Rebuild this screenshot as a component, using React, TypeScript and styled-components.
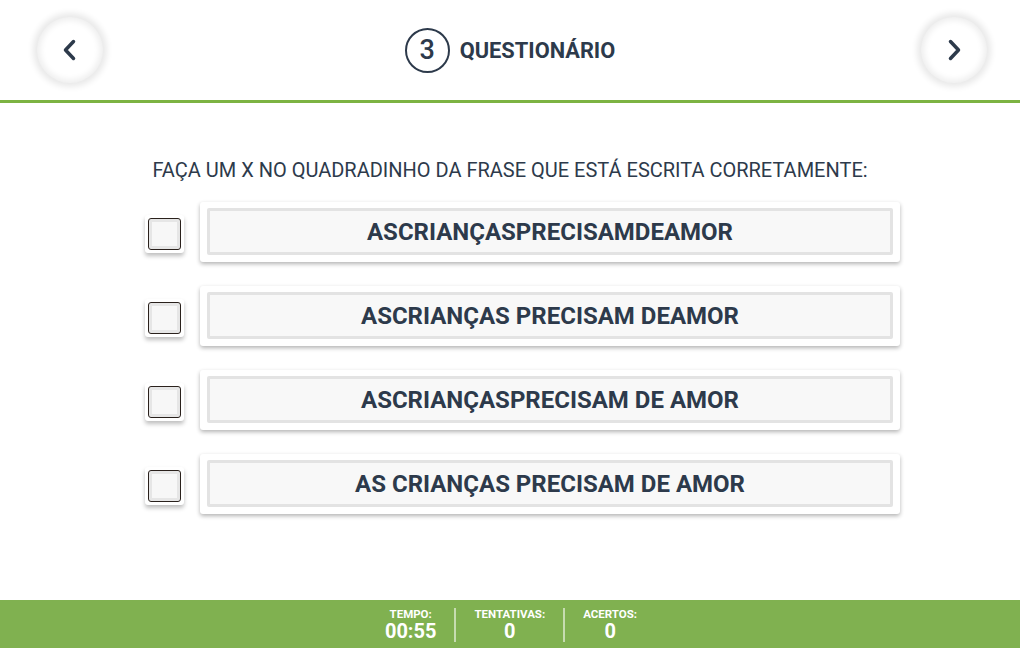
import React from "react";
import styled, { createGlobalStyle } from "styled-components";

const Global = createGlobalStyle`
  html, body { margin: 0; padding: 0; background: #ffffff; }
  body { font-family: Roboto, "Liberation Sans", sans-serif; color: #2d3a4b; }
  * { box-sizing: border-box; }
`;

const Page = styled.div`
  width: 1020px;
  height: 648px;
  display: flex;
  flex-direction: column;
  overflow: hidden;
`;

const Header = styled.header`
  height: 103px;
  flex: none;
  border-bottom: 3px solid #7cb342;
  display: flex;
  align-items: center;
  justify-content: space-between;
  padding: 0 33px 0 37px;
`;

const NavButton = styled.button`
  width: 66px;
  height: 66px;
  border-radius: 50%;
  border: none;
  background: #ffffff;
  box-shadow: 0 0 6px 4px rgba(0, 0, 0, 0.09), inset 0 0 6px 3px rgba(0, 0, 0, 0.07);
  display: flex;
  align-items: center;
  justify-content: center;
  padding: 0;
  cursor: pointer;
`;

const Title = styled.div`
  display: flex;
  align-items: center;
  gap: 10px;
  margin-right: 4px;
`;

const StepCircle = styled.div`
  width: 45px;
  height: 45px;
  border-radius: 50%;
  border: 2px solid #2d3a4b;
  display: flex;
  align-items: center;
  justify-content: center;
  font-size: 27px;
  font-weight: 500;
  color: #2d3a4b;
`;

const TitleText = styled.span`
  font-size: 21.8px;
  font-weight: 700;
  color: #2d3a4b;
`;

const Main = styled.main`
  flex: 1;
  display: flex;
  flex-direction: column;
  padding-top: 55px;
`;

const Instruction = styled.p`
  margin: 0 0 20px 0;
  text-align: center;
  font-size: 20px;
  font-weight: 400;
  color: #2d3a4b;
  line-height: 24px;
`;

const Options = styled.div`
  display: flex;
  flex-direction: column;
  gap: 24px;
  padding-left: 145px;
`;

const Row = styled.label`
  display: flex;
  align-items: center;
  gap: 16px;
`;

const CheckWrap = styled.div`
  width: 39px;
  height: 38px;
  margin-top: 4px;
  background: #ffffff;
  border-radius: 3px;
  box-shadow: 0 3px 4px rgba(0, 0, 0, 0.25);
  display: flex;
  align-items: center;
  justify-content: center;
`;

const Check = styled.div`
  width: 33px;
  height: 32px;
  border: 1.5px solid #2a211c;
  border-radius: 3px;
  background: #f7f7f7;
  box-shadow: inset 0 0 0 3px #e6e6e6;
`;

const Card = styled.div`
  width: 700px;
  height: 60px;
  background: #ffffff;
  border-radius: 3px;
  box-shadow: 0 2px 4px rgba(0, 0, 0, 0.3);
  padding: 6px 7px 7px 7px;
`;

const CardInner = styled.div`
  height: 100%;
  background: #f8f8f8;
  border: 3px solid #e3e3e3;
  border-radius: 2px;
  display: flex;
  align-items: center;
  justify-content: center;
  font-size: 24px;
  font-weight: 700;
  color: #2d3a4b;
`;

const Footer = styled.footer`
  height: 48px;
  flex: none;
  background: #80b150;
  display: flex;
  justify-content: center;
  align-items: stretch;
  padding: 8px 0 6px 2px;
`;

const Stat = styled.div<{ $sep?: boolean }>`
  display: flex;
  flex-direction: column;
  align-items: center;
  padding: 0 18px;
  border-left: ${(p) => (p.$sep ? "2px solid rgba(255,255,255,0.55)" : "none")};
  color: #ffffff;
  font-weight: 700;
`;

const StatLabel = styled.span`
  font-size: 11.5px;
  line-height: 13px;
`;

const StatValue = styled.span`
  font-size: 20px;
  line-height: 20px;
`;

const Chevron = ({ dir }: { dir: "left" | "right" }) => (
  <svg width="24" height="24" viewBox="0 0 24 24">
    <path
      d={dir === "left" ? "M15.5 3.5 L7.5 12 L15.5 20.5" : "M8.5 3.5 L16.5 12 L8.5 20.5"}
      fill="none"
      stroke="#2d3a4b"
      strokeWidth="3.5"
      strokeLinecap="round"
      strokeLinejoin="round"
    />
  </svg>
);

const options = [
  "ASCRIANÇASPRECISAMDEAMOR",
  "ASCRIANÇAS PRECISAM DEAMOR",
  "ASCRIANÇASPRECISAM DE AMOR",
  "AS CRIANÇAS PRECISAM DE AMOR",
];

export default function App() {
  return (
    <>
      <Global />
      <Page>
        <Header>
          <NavButton aria-label="Anterior">
            <Chevron dir="left" />
          </NavButton>
          <Title>
            <StepCircle>3</StepCircle>
            <TitleText>QUESTIONÁRIO</TitleText>
          </Title>
          <NavButton aria-label="Próximo">
            <Chevron dir="right" />
          </NavButton>
        </Header>
        <Main>
          <Instruction>FAÇA UM X NO QUADRADINHO DA FRASE QUE ESTÁ ESCRITA CORRETAMENTE:</Instruction>
          <Options>
            {options.map((o) => (
              <Row key={o}>
                <CheckWrap>
                  <Check />
                </CheckWrap>
                <Card>
                  <CardInner>{o}</CardInner>
                </Card>
              </Row>
            ))}
          </Options>
        </Main>
        <Footer>
          <Stat>
            <StatLabel>TEMPO:</StatLabel>
            <StatValue>00:55</StatValue>
          </Stat>
          <Stat $sep>
            <StatLabel>TENTATIVAS:</StatLabel>
            <StatValue>0</StatValue>
          </Stat>
          <Stat $sep>
            <StatLabel>ACERTOS:</StatLabel>
            <StatValue>0</StatValue>
          </Stat>
        </Footer>
      </Page>
    </>
  );
}
